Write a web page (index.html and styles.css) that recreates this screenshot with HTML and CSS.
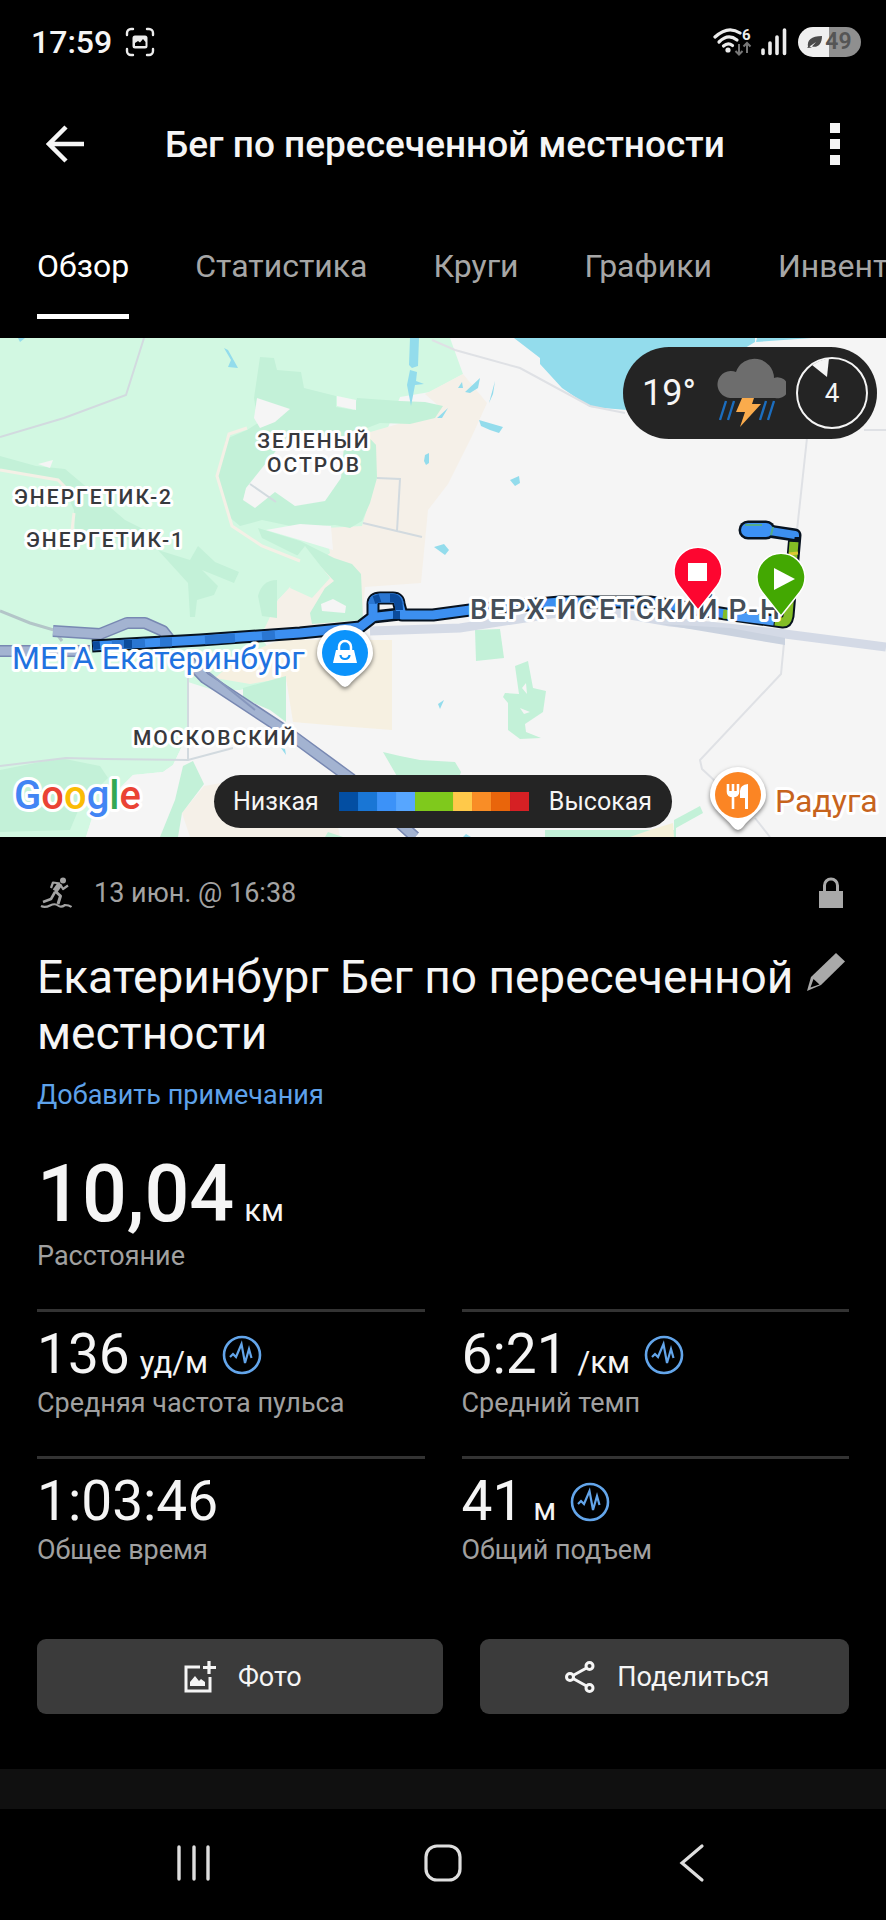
FILE: index.html
```html
<!DOCTYPE html>
<html lang="ru">
<head>
<meta charset="utf-8">
<meta name="viewport" content="width=device-width, initial-scale=1">
<title>Бег по пересеченной местности</title>
<link rel="stylesheet" href="styles.css">
</head>
<body>
<div class="status-bar">
  <div class="status-group">
    <span class="clock">17:59</span>
    <svg class="capture-icon" viewBox="0 0 30 30" width="30" height="30" aria-hidden="true">
      <path d="M2 8V6a4 4 0 0 1 4-4h2M22 2h2a4 4 0 0 1 4 4v2M28 22v2a4 4 0 0 1-4 4h-2M8 28H6a4 4 0 0 1-4-4v-2" fill="none" stroke="#ececec" stroke-width="2.4" stroke-linecap="round"/>
      <rect x="7.500" y="8.500" width="15" height="13" rx="2.500" fill="#ececec"/>
      <path d="M10 19v-3l3-2 2 1.500 3-3.500 2.500 3v4z" fill="#000"/>
    </svg>
  </div>
  <div class="status-group status-right">
    <svg viewBox="0 0 76 32" width="76" height="32" aria-hidden="true">
      <g fill="none" stroke="#ececec" stroke-width="3.200" stroke-linecap="round">
        <path d="M3 11Q16 -1 28 7"/>
        <path d="M7 16Q16 7 25 14"/>
        <path d="M11.500 20Q16 16 20.500 19.500"/>
      </g>
      <circle cx="16" cy="24" r="2.600" fill="#ececec"/>
      <text x="30" y="14" class="wifi-generation">6</text>
      <path d="M27 18v10M23.500 25l3.500 3.500 3.500-3.500M35 27V17M31.500 20.500L35 17l3.500 3.500" fill="none" stroke="#777" stroke-width="2"/>
      <g stroke="#ececec" stroke-width="3.600" stroke-linecap="round">
        <path d="M51 24v3.500M58 17v10.500M65 11v16.500M72.500 4v23.500"/>
      </g>
    </svg>
    <div class="battery">
      <svg viewBox="0 0 16 14" width="16" height="14" aria-hidden="true">
        <path d="M1 12C0 5 4 1 15 1c0 8-4 12-10 10.500L9 7 2.500 11.500 5 12.500 0 13z" fill="#4b4b4b"/>
      </svg>
      <span>49</span>
    </div>
  </div>
</div>

<header class="app-bar">
  <button class="icon-button" type="button" aria-label="Назад">
    <svg viewBox="0 0 40 40" width="40" height="40" aria-hidden="true">
      <path d="M20 3L3 20l17 17M3 20h35" fill="none" stroke="#f5f5f5" stroke-width="4.500"/>
    </svg>
  </button>
  <h1 class="app-title">Бег по пересеченной местности</h1>
  <button class="icon-button" type="button" aria-label="Ещё">
    <svg viewBox="0 0 10 44" width="10" height="44" aria-hidden="true">
      <path d="M0 1h10v10H0zM0 17h10v10H0zM0 33h10v10H0z" fill="#f5f5f5"/>
    </svg>
  </button>
</header>

<nav class="tabs" aria-label="Разделы">
  <a class="tab tab-active" href="#overview" aria-current="page">Обзор</a>
  <a class="tab" href="#stats">Статистика</a>
  <a class="tab" href="#laps">Круги</a>
  <a class="tab" href="#charts">Графики</a>
  <a class="tab" href="#gear">Инвент</a>
</nav>

<section class="map" aria-label="Карта маршрута">
  <svg class="map-canvas" viewBox="0 0 886 499" preserveAspectRatio="xMidYMid slice">
    <rect width="886" height="499" fill="#f5f5f5"/>
    <path d="M0 0H450L463 36 430 54 400 59 380 110 365 190 300 240 278 262 262 300 286 340 240 352 213 356 192 370 188 396 173 427 163 434 133 437 93 477 86 499H0z" fill="#d2f8e2"/>
    <path d="M463 36L487 65 472 98 448 146 428 172 421 245 365 249 362 282 290 300 260 300 278 262 300 238 330 215 325 190 362 188 376 140V107L360 97 398 86 440 69 425 56z" fill="#f5f0e8"/>
    <path d="M280 302H392V392L340 388 293 384 286 340 250 346 215 340 240 318z" fill="#f6f0e1"/>
    <path d="M188 344L213 352 240 352 286 384 296 410 340 440 350 499H86L93 477 133 437 163 434 173 427 188 396z" fill="#f5f5f5"/>
    <path d="M204 448L250 440 330 446 340 499H190L182 475z" fill="#f5f0e8"/>

    <g fill="#c3f1d8">
      <path d="M260 19L274 20 277 32 301 34 304 50 336 58V69L354 72 357 60 400 63 425 64 443 68 435 80 410 86 380 85 362 92 376 107 377 140 370 165 362 183 350 190 335 187 300 190 262 182 240 188 228 178 217 140 226 101 247 92 258 85 254 60z"/>
      <path d="M258 190L300 203 334 220 352 226 361 236 363 282 312 286 310 275 325 250 334 243 320 228 290 214 262 200z"/>
      <path d="M0 118L36 128 65 131 90 152 125 182 145 192 130 202 75 194 74 172 60 142 0 131z"/>
      <path d="M158 212L190 222 198 208 215 224 239 234 234 245 202 232 218 248 214 257 197 262 195 279H190L188 245z"/>
      <path d="M258 258Q262 242 277 242V280L262 278z"/>
      <path d="M0 432L60 420 100 428 108 440 80 468 70 492 0 494z"/>
      <path d="M183 428L193 423 204 446 182 475 178 499H160L175 462z"/>
      <path d="M243 350L286 338V384L270 372 243 360z"/>
      <path d="M475 292L500 291 504 320 476 323z"/>
      <path d="M515 328L528 323 533 350 546 353 543 374 525 386 526 394 541 400 520 401 508 392 508 365 503 359 505 355 519 356z"/>
      <path d="M383 414L400 418 420 422 455 424 461 434 457 445 398 440z"/>
      <path d="M674 482L700 468 703 475 676 490V499H545V492H674z"/>
      <path d="M325 499l3-5 15 5z"/>
    </g>
    <path d="M305 208L330 240 312 260 290 250 297 218z" fill="#d2f8e2"/>
    <path d="M673 485L650 492 630 499H674z" fill="#f5f0d8"/>
    <g fill="#f5f5f5">
      <path d="M257 60L290 71 275 84 260 90 254 80z"/>
      <path d="M337 58L356 62V72L337 68z"/>
      <path d="M288 98L345 98 341 140 325 163 295 168 275 154 255 170 243 162 246 150 262 130z"/>
      <path d="M266 192L300 186 331 188 333 212 300 202z"/>
      <path d="M321 266L333 261 346 268 345 275 322 273z"/>
      <path d="M38 126L53 122 50 130z"/>
      <path d="M522 350L526 345 527 356zM520 370L530 374 524 376z"/>
    </g>
    <path d="M247 90L229 96 217 138 232 188 262 208 300 223M0 132L58 142 66 150M74 175L72 192" fill="none" stroke="#f4f0e6" stroke-width="3"/>

    <g fill="#93dcec">
      <path d="M514 0L540 20V26L562 50 590 69 640 73 755 4 755 0zM756 4L812 0H757z"/>
      <path d="M410 0H419L418 28 412 30 409 27zM410 32L417 34 416 43 424 46 415 47 411 68 407 47z"/>
      <path d="M465 54L480 40 478 50 470 55zM489 65L495 43 493 56zM458 50l4-6 1 6zM479 82L503 89 499 95 490 92 481 88zM437 80l11-10-6 10zM425 117l4-2v10l-3 2-2-4zM510 142l9-4 1 7-5 3zM434 209l10-3 5 6-4 5zM438 366l6-4-4 9zM463 499l3-3 5 3zM281 410l5 7-1-6z"/>
      <path d="M224 10L228 12 238 30 228 29 231 22zM18 0H25L20 4z"/>
    </g>

    <g fill="none" stroke="#d2dadf" stroke-width="2">
      <path d="M144 0L126 57 64 80 0 99M188 335V421M0 428L66 420 105 421 188 422 233 410"/>
      <path d="M250 146L276 164M377 140L400 141 397 193M363 185L422 199"/>
    </g>
    <g fill="none" stroke="#dfe1e5" stroke-width="2">
      <path d="M432 2L455 12 520 30 590 68 625 75M807 100L797 192M864 92H886M784 305L781 336 700 422 702 431 715 443M755 480L770 499"/>
    </g>
    <path d="M370 293L460 290 590 270 670 284 785 296 886 309" fill="none" stroke="#d4dae6" stroke-width="9"/>
    <path d="M660 286L730 290 785 300V307z" fill="#cad2df"/>

    <path d="M0 273L30 285 54 292 62 303" fill="none" stroke="#b3c5c8" stroke-width="3"/>
    <g fill="none" stroke-linejoin="round">
      <path d="M0 313H90M53 293L100 296 127 285H145L163 293 174 307M186 320L205 340 290 396 350 440 415 499" stroke="#7888b2" stroke-width="12"/>
      <path d="M0 313H90M53 293L100 296 127 285H145L163 293 174 307M186 320L205 340 290 396 350 440 415 499" stroke="#a3b3d1" stroke-width="9"/>
      <path d="M202 329L255 372" stroke="#8797bd" stroke-width="2"/>
    </g>

    <g fill="none" stroke-linejoin="round">
      <path d="M92 308L200 302 300 295 360 289 373 279V266Q373 260 380 260H393Q399 260 399 266L402 277 433 277 470 272 560 264 650 264 726 276 783 284Q787 284 788 278L795 197 768 193H748M373 279L400 276" stroke="#07121f" stroke-width="13"/>
      <path d="M748 192H766" stroke="#07121f" stroke-width="19" stroke-linecap="round"/>
      <path d="M93 308L200 302 300 295 360 289 373 279V266Q373 260 380 260H393Q399 260 399 266L402 277 433 277 470 272 560 264 650 264 726 276" stroke="#3c8ff0" stroke-width="9"/>
      <path d="M373 279L400 276M770 193L795 197V199" stroke="#3c8ff0" stroke-width="8"/>
      <path d="M112 307L145 305M160 304L172 304M205 302L235 300M262 298L275 297M373 266Q373 260 380 260H393Q399 260 399 266" stroke="#2a76d2" stroke-width="9"/>
      <path d="M93 308L100 307M124 306L132 306M374 262L380 260M390 260H393Q399 260 399 272M393 277L400 277" stroke="#0b4b9c" stroke-width="8"/>
      <path d="M723 276L732 277M775 283L783 284Q787 284 788 278L794 204" stroke="#83bd25" stroke-width="9"/>
      <path d="M734 278L774 283" stroke="#4a9af6" stroke-width="9"/>
      <path d="M748 192H766" stroke="#3c91f5" stroke-width="14" stroke-linecap="round"/>
      <path d="M745 187H762M773 189L771 197" stroke="#54ab8a" stroke-width="2"/>
      <path d="M789 216L798 215" stroke="#d9c832" stroke-width="3"/>
    </g>

    <g class="map-labels">
      <text class="place" x="14" y="166">ЭНЕРГЕТИК-2</text>
      <text class="place" x="26" y="209">ЭНЕРГЕТИК-1</text>
      <text class="place place-centered" x="314" y="110">ЗЕЛЕНЫЙ</text>
      <text class="place place-centered" x="314" y="134">ОСТРОВ</text>
      <text class="place" x="133" y="407">МОСКОВСКИЙ</text>
      <text class="district" x="470" y="281">ВЕРХ-ИСЕТСКИЙ Р-Н</text>
      <text class="poi poi-shop" x="12" y="331">МЕГА Екатеринбург</text>
      <text class="poi poi-food" x="775" y="474">Радуга</text>
      <text class="map-brand" x="14" y="471"><tspan fill="#4285f4">G</tspan><tspan fill="#ea4335">o</tspan><tspan fill="#fbbc05">o</tspan><tspan fill="#4285f4">g</tspan><tspan fill="#34a853">l</tspan><tspan fill="#ea4335">e</tspan></text>
    </g>

    <g class="poi-pin" transform="translate(345 315)">
      <path d="M-28 0A28 28 0 1 1 28 0C28 14 12 22 5 31Q0 37-5 31C-12 22-28 14-28 0z" fill="#fff"/>
      <circle r="23" fill="#0b93fb"/>
      <path d="M-9-3H9L12 10H-12z" fill="#fff"/>
      <path d="M-6-2V-6A6 6 0 0 1 6-6V-2" fill="none" stroke="#fff" stroke-width="2.500"/>
      <path d="M-4.500 2A4.500 4 0 0 0 4.500 2" fill="none" stroke="#0b93fb" stroke-width="2.200"/>
    </g>
    <g class="poi-pin" transform="translate(738 457)">
      <path d="M-28 0A28 28 0 1 1 28 0C28 14 12 22 5 32Q0 38-5 32C-12 22-28 14-28 0z" fill="#fff"/>
      <circle r="23" fill="#fb8524"/>
      <path d="M-10-11V-3Q-10 1-5 1T0-3V-11M-5-11V14" fill="none" stroke="#fff" stroke-width="2.600"/>
      <path d="M-10-4H0V-1L-5 3-10-1zM10-11V14H7V3H2V-4Q2-10 10-11z" fill="#fff"/>
    </g>
    <g transform="translate(698 234)">
      <path d="M0 38L-19 14A24 24 0 1 1 19 14z" fill="#fd0630" stroke="#fff" stroke-width="1.500"/>
      <rect x="-10" y="-9" width="19" height="18" fill="#fff"/>
    </g>
    <g transform="translate(781 240)">
      <path d="M0 38L-19 14A24 24 0 1 1 19 14z" fill="#43a802" stroke="#fff" stroke-width="1.500"/>
      <path d="M-7-10V12L14 1z" fill="#fff"/>
    </g>
  </svg>

  <div class="weather">
    <span class="temperature">19°</span>
    <svg viewBox="0 0 70 70" width="70" height="70" role="img" aria-label="Гроза">
      <path d="M14 40A13.500 13.500 0 1 1 20 14A19.500 19.500 0 0 1 58 20A10.500 10.500 0 1 1 59 40z" fill="#6d6d6d"/>
      <path d="M10 43L4 62M18 43L12 62M50 43L44 62M58 43L52 62" fill="none" stroke="#1b6dbf" stroke-width="2.400"/>
      <path d="M26 40H38L36 46H45L24 69 29 54H20z" fill="#faab4c"/>
    </svg>
    <div class="wind">
      <svg class="wind-dial" viewBox="0 0 72 72" width="72" height="72" aria-hidden="true">
        <circle cx="36" cy="36" r="35" fill="none" stroke="#f5f5f5" stroke-width="2"/>
        <path d="M16 8Q24 3 33 1L31 20z" fill="#f5f5f5"/>
      </svg>
      <span class="wind-speed">4</span>
    </div>
  </div>

  <div class="legend">
    <span>Низкая</span>
    <div class="legend-scale" aria-hidden="true">
      <i class="swatch s1"></i><i class="swatch s2"></i><i class="swatch s3"></i><i class="swatch s4"></i><i class="swatch s5"></i><i class="swatch s6"></i><i class="swatch s7"></i><i class="swatch s8"></i><i class="swatch s9"></i>
    </div>
    <span>Высокая</span>
  </div>
</section>

<main class="details" id="overview">
  <div class="meta">
    <svg viewBox="0 0 32 32" width="32" height="32" aria-hidden="true">
      <g fill="none" stroke="#a3a3a3" stroke-linejoin="round">
        <path d="M11 11L13 5.500 20 6.500M20 7L23 12 28 8.500" stroke-width="2.200"/>
        <path d="M20 7L15 14" stroke-width="5.500"/>
        <path d="M15 14L20.500 19 18 27" stroke-width="3"/>
        <path d="M15 15L11 22 3 25" stroke-width="2.600"/>
        <path d="M1 29Q5 31 10 28.500T18 28.500T25 28Q29 28 31.500 30" stroke-width="2.200"/>
      </g>
      <circle cx="23" cy="3.500" r="3" fill="#a3a3a3"/>
    </svg>
    <time class="date" datetime="06-13T16:38">13 июн. @ 16:38</time>
    <svg class="lock" viewBox="0 0 24 32" width="24" height="32" role="img" aria-label="Только я">
      <path d="M0 14H24V31H0z" fill="#a9a9a9"/>
      <path d="M5.500 15V8.500a6.500 6.500 0 0 1 13 0V15" fill="none" stroke="#a9a9a9" stroke-width="3"/>
    </svg>
  </div>

  <div class="heading-row">
    <h2 class="activity-title">Екатеринбург Бег по пересеченной местности</h2>
    <button class="icon-button edit-button" type="button" aria-label="Изменить название">
      <svg viewBox="0 0 40 40" width="40" height="40" aria-hidden="true">
        <path d="M30 1L39 9.500 15 33 1 39 5 25z" fill="#a9a9a9"/>
        <path d="M7.500 27L13.500 32.500 4.500 35.500z" fill="#000"/>
      </svg>
    </button>
  </div>
  <a class="notes-link" href="#notes">Добавить примечания</a>

  <div class="distance">
    <p class="distance-value">10,04<span class="unit">км</span></p>
    <p class="stat-label">Расстояние</p>
  </div>

  <div class="stats">
    <div class="stat">
      <p class="stat-value">136<span class="unit">уд/м</span>
        <svg class="pulse" viewBox="0 0 40 40" width="40" height="40" aria-hidden="true"><circle cx="20" cy="20" r="18" fill="none" stroke="#63a5ea" stroke-width="2.600"/><path d="M8 22L11 19 14 22 19.500 9 23 28 27 14 29.500 23" fill="none" stroke="#63a5ea" stroke-width="2.200"/></svg></p>
      <p class="stat-label">Средняя частота пульса</p>
    </div>
    <div class="stat">
      <p class="stat-value">6:21<span class="unit">/км</span>
        <svg class="pulse" viewBox="0 0 40 40" width="40" height="40" aria-hidden="true"><circle cx="20" cy="20" r="18" fill="none" stroke="#63a5ea" stroke-width="2.600"/><path d="M8 22L11 19 14 22 19.500 9 23 28 27 14 29.500 23" fill="none" stroke="#63a5ea" stroke-width="2.200"/></svg></p>
      <p class="stat-label">Средний темп</p>
    </div>
    <div class="stat">
      <p class="stat-value">1:03:46</p>
      <p class="stat-label">Общее время</p>
    </div>
    <div class="stat">
      <p class="stat-value">41<span class="unit">м</span>
        <svg class="pulse" viewBox="0 0 40 40" width="40" height="40" aria-hidden="true"><circle cx="20" cy="20" r="18" fill="none" stroke="#63a5ea" stroke-width="2.600"/><path d="M8 22L11 19 14 22 19.500 9 23 28 27 14 29.500 23" fill="none" stroke="#63a5ea" stroke-width="2.200"/></svg></p>
      <p class="stat-label">Общий подъем</p>
    </div>
  </div>

  <div class="actions">
    <button class="action action-photo" type="button">
      <svg viewBox="0 0 32 32" width="32" height="32" aria-hidden="true">
        <path d="M16 6H2V30H26V16" fill="none" stroke="#f5f5f5" stroke-width="3"/>
        <path d="M25 0V13M19 6.500H32" stroke="#f5f5f5" stroke-width="3.200"/>
        <path d="M6 25V21L11 15 15 20 17 18 21 21V25z" fill="#f5f5f5"/>
      </svg>
      Фото
    </button>
    <button class="action" type="button">
      <svg viewBox="0 0 30 32" width="30" height="32" aria-hidden="true">
        <g fill="none" stroke="#f5f5f5" stroke-width="3"><circle cx="24.500" cy="5" r="3.500"/><circle cx="5" cy="16" r="3.500"/><circle cx="24.500" cy="27" r="3.500"/><path d="M8 14.500L21.500 7M8 17.500L21.500 25"/></g>
      </svg>
      Поделиться
    </button>
  </div>
</main>

<div class="section-divider"></div>

<nav class="system-nav" aria-label="Системная навигация">
  <button class="system-button" type="button" aria-label="Недавние"><svg viewBox="0 0 40 40" width="40" height="40" aria-hidden="true"><path d="M5 4V36M20 4V36M34 4V36" fill="none" stroke="#dedede" stroke-width="3.400" stroke-linecap="round"/></svg></button>
  <button class="system-button" type="button" aria-label="Домой"><svg viewBox="0 0 40 40" width="40" height="40" aria-hidden="true"><rect x="3" y="3" width="34" height="34" rx="11" fill="none" stroke="#dedede" stroke-width="3.200"/></svg></button>
  <button class="system-button" type="button" aria-label="Назад"><svg viewBox="0 0 40 40" width="40" height="40" aria-hidden="true"><path d="M30 3L10 20 30 37" fill="none" stroke="#dedede" stroke-width="3.200" stroke-linecap="round"/></svg></button>
</nav>
</body>
</html>
```
FILE: styles.css
```css
* {
  box-sizing: border-box;
}

body {
  margin: 0;
  min-height: 100vh;
  display: flex;
  flex-direction: column;
  background: #000;
  color: #f5f5f5;
  font-family: Roboto, "Noto Sans", sans-serif;
  overflow-x: hidden;
}

h1,
h2,
p {
  margin: 0;
  font-weight: 400;
}

svg {
  display: block;
  flex: none;
}

button {
  font: inherit;
  color: inherit;
  border: 0;
  padding: 0;
  background: none;
}

/* Status bar */
.status-bar {
  height: 84px;
  padding: 0 25px 0 31px;
  display: flex;
  align-items: center;
  justify-content: space-between;
}

.status-group {
  display: flex;
  align-items: center;
  gap: 13px;
}

.status-right {
  gap: 10px;
}

.clock {
  font-size: 32px;
  font-weight: 500;
  line-height: 40px;
}

.wifi-generation {
  font: 700 15px Roboto, sans-serif;
  fill: #ececec;
}

.battery {
  width: 63px;
  height: 30px;
  border-radius: 15px;
  display: flex;
  align-items: center;
  justify-content: center;
  gap: 2px;
  font-size: 23px;
  font-weight: 600;
  line-height: 30px;
  color: #555;
  background: linear-gradient(90deg, #efefef 49%, #8f8f8f 49%);
}

/* App bar */
.app-bar {
  height: 120px;
  padding: 0 46px;
  display: flex;
  align-items: center;
}

.app-title {
  flex: 1;
  padding: 2px 0 0 79px;
  font-size: 37px;
  font-weight: 500;
  line-height: 44px;
}

/* Tabs */
.tabs {
  padding: 42px 0 19px 37px;
  display: flex;
  gap: 66px;
  overflow: hidden;
}

.tab {
  flex: none;
  padding-bottom: 28px;
  border-bottom: 5px solid transparent;
  font-size: 32px;
  line-height: 40px;
  color: #a6a6a6;
  text-decoration: none;
}

.tab-active {
  color: #fff;
  border-color: #fff;
}

/* Map */
.map {
  position: relative;
  aspect-ratio: 886 / 499;
  overflow: hidden;
}

.map-canvas {
  width: 100%;
  height: 100%;
}

.map-labels {
  font-family: Roboto, "Noto Sans", sans-serif;
  stroke: #fff;
  stroke-width: 6px;
  stroke-linejoin: round;
  paint-order: stroke;
}

.place {
  font-size: 21px;
  font-weight: 500;
  letter-spacing: 2px;
  fill: #37393d;
}

.place-centered {
  text-anchor: middle;
}

.district {
  font-size: 28px;
  font-weight: 500;
  letter-spacing: 2px;
  fill: #454e58;
}

.poi {
  font-size: 32px;
}

.poi-shop {
  fill: #1f72e0;
}

.poi-food {
  fill: #c7641d;
}

.map-brand {
  font-size: 40px;
  font-weight: 500;
}

.poi-pin {
  filter: drop-shadow(0 2px 2px rgba(0, 0, 0, 0.5));
}

.weather {
  position: absolute;
  top: 9px;
  right: 9px;
  height: 92px;
  padding: 0 9px 0 19px;
  border-radius: 46px;
  display: flex;
  align-items: center;
  gap: 10px;
  background: #242424;
}

.temperature {
  padding-right: 10px;
  font-size: 36px;
  line-height: 44px;
}

.wind {
  display: grid;
  place-items: center;
}

.wind-dial,
.wind-speed {
  grid-area: 1 / 1;
}

.wind-speed {
  font-size: 26px;
  line-height: 32px;
}

.legend {
  position: absolute;
  left: 50%;
  bottom: 9px;
  transform: translateX(-50%);
  height: 53px;
  padding: 0 20px 0 19px;
  border-radius: 27px;
  display: flex;
  align-items: center;
  gap: 20px;
  font-size: 25px;
  line-height: 32px;
  background: #242424;
}

.legend-scale {
  width: 190px;
  height: 19px;
  display: flex;
}

.swatch {
  flex: 1;
}

.s1 { background: #034ea2; }
.s2 { background: #1976d5; }
.s3 { background: #3c92f8; }
.s4 { background: #57a6ff; }
.s5 { background: #7fc91c; flex: 2; }
.s6 { background: #ffc94a; }
.s7 { background: #f98d26; }
.s8 { background: #e9650b; }
.s9 { background: #d62024; }

/* Activity details */
.details {
  padding: 40px 37px 55px;
}

.meta {
  padding-left: 3px;
  display: flex;
  align-items: center;
  font-size: 27px;
  line-height: 32px;
  color: #a3a3a3;
}

.date {
  margin-left: 22px;
}

.lock {
  margin-left: auto;
  margin-right: 6px;
}

.heading-row {
  margin-top: 40px;
  display: flex;
  align-items: flex-start;
  justify-content: space-between;
}

.activity-title {
  font-size: 46px;
  line-height: 56px;
}

.edit-button {
  margin-top: 3px;
  margin-right: 3px;
}

.notes-link {
  display: block;
  width: fit-content;
  margin-top: 18px;
  font-size: 27px;
  line-height: 32px;
  color: #5ea2ea;
  text-decoration: none;
}

.distance {
  margin: 43px 0 37px;
}

.distance-value {
  display: flex;
  align-items: baseline;
  gap: 10px;
  font-size: 79px;
  font-weight: 500;
  line-height: 80px;
}

.unit {
  font-size: 31px;
  font-weight: 400;
  line-height: 32px;
}

.distance .stat-label {
  margin-top: 6px;
}

.stat-label {
  font-size: 27px;
  line-height: 32px;
  color: #a0a0a0;
}

.stats {
  display: grid;
  grid-template-columns: 1fr 1fr;
  gap: 37px;
}

.stat {
  padding-top: 10px;
  border-top: 3px solid #333;
}

.stat-value {
  display: flex;
  align-items: baseline;
  gap: 10px;
  font-size: 55px;
  line-height: 65px;
}

.pulse {
  align-self: center;
  margin-left: 4px;
}

.actions {
  margin-top: 73px;
  display: flex;
  gap: 37px;
}

.action {
  flex: 369;
  height: 75px;
  padding-left: 6px;
  border-radius: 9px;
  display: flex;
  align-items: center;
  justify-content: center;
  gap: 22px;
  font-size: 27px;
  line-height: 32px;
  background: #3b3b3b;
}

.action-photo {
  flex: 406;
}

.section-divider {
  height: 40px;
  background: #101010;
}

/* System navigation */
.system-nav {
  flex: 1;
  min-height: 111px;
  padding: 0 70px 4px;
  display: flex;
  align-items: center;
}

.system-button {
  flex: 1;
  display: flex;
  justify-content: center;
}
```
